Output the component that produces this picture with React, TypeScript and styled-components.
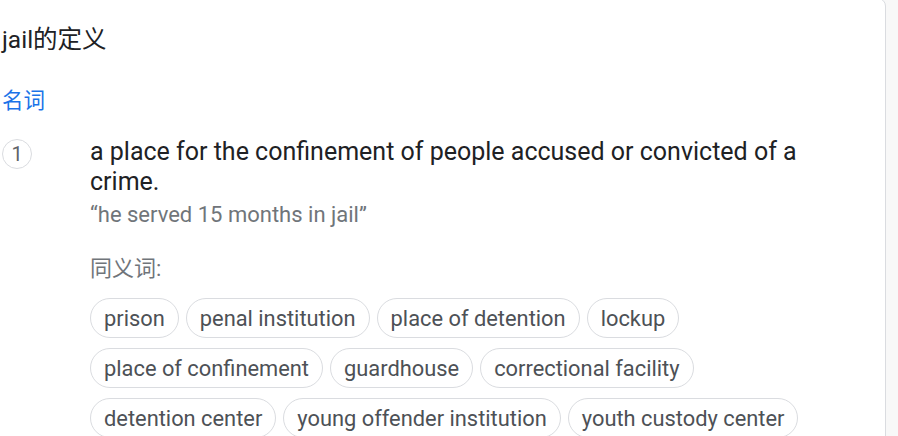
import React from 'react';
import styled, { createGlobalStyle } from 'styled-components';

const GlobalStyle = createGlobalStyle`
  html, body {
    margin: 0;
    padding: 0;
    background: #f8f8f8;
    overflow: hidden;
  }
  body {
    font-family: Roboto, "Noto Sans CJK SC", sans-serif;
  }
`;

const Page = styled.div`
  width: 898px;
  height: 436px;
  overflow: hidden;
`;

const Card = styled.div`
  margin: -2px 0 0 -18px;
  width: 904px;
  height: 460px;
  box-sizing: border-box;
  background: #fff;
  border: 1px solid #dadce0;
  border-radius: 8px;
  padding: 0 19px;
`;

const Title = styled.div`
  margin-top: 26px;
  font-size: 24.5px;
  line-height: 30px;
  color: #202124;
`;

const PartOfSpeech = styled.div`
  margin-top: 33px;
  font-size: 21.5px;
  line-height: 26px;
  color: #1a73e8;
`;

const Sense = styled.div`
  display: flex;
  margin-top: 23px;
`;

const Number = styled.div`
  flex: none;
  width: 28px;
  height: 28px;
  margin-top: 2px;
  border: 1px solid #dadce0;
  border-radius: 50%;
  display: flex;
  align-items: center;
  justify-content: center;
  font-size: 20px;
  color: #5f6368;
`;

const Body = styled.div`
  margin-left: 58px;
  flex: 1;
`;

const Definition = styled.div`
  font-size: 25px;
  line-height: 30px;
  color: #202124;
  max-width: 740px;
`;

const Example = styled.div`
  margin-top: 4px;
  font-size: 22px;
  line-height: 28px;
  color: #70757a;
`;

const SynLabel = styled.div`
  margin-top: 26px;
  font-size: 22px;
  line-height: 28px;
  color: #70757a;
`;

const Chips = styled.div`
  display: flex;
  flex-wrap: wrap;
  gap: 10px 7px;
  margin-top: 15px;
  max-width: 740px;
`;

const Chip = styled.div`
  height: 40px;
  box-sizing: border-box;
  border: 1px solid #dadce0;
  border-radius: 20px;
  padding: 0 13px;
  display: flex;
  align-items: center;
  font-size: 21.85px;
  color: #4d5156;
`;

const synonyms = [
  'prison',
  'penal institution',
  'place of detention',
  'lockup',
  'place of confinement',
  'guardhouse',
  'correctional facility',
  'detention center',
  'young offender institution',
  'youth custody center',
];

export default function App() {
  return (
    <Page>
      <GlobalStyle />
      <Card>
        <Title>jail的定义</Title>
        <PartOfSpeech>名词</PartOfSpeech>
        <Sense>
          <Number>1</Number>
          <Body>
            <Definition>
              a place for the confinement of people accused or convicted of a crime.
            </Definition>
            <Example>“he served 15 months in jail”</Example>
            <SynLabel>同义词:</SynLabel>
            <Chips>
              {synonyms.map((s) => (
                <Chip key={s}>{s}</Chip>
              ))}
            </Chips>
          </Body>
        </Sense>
      </Card>
    </Page>
  );
}
